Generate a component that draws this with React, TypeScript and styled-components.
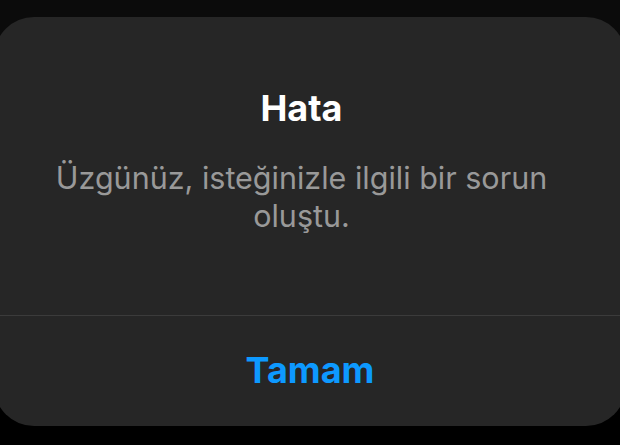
import React from "react";
import styled, { createGlobalStyle } from "styled-components";

const Global = createGlobalStyle`
  html, body {
    margin: 0;
    padding: 0;
    width: 620px;
    height: 445px;
    overflow: hidden;
    background: linear-gradient(#0b0b0b 0 50%, #000 50%);
  }
  body {
    font-family: Inter, "Noto Sans", sans-serif;
  }
`;

const Screen = styled.div`
  width: 620px;
  height: 445px;
  padding-top: 17px;
  box-sizing: border-box;
  overflow: hidden;
`;

const Dialog = styled.div`
  margin: 0 -6px;
  height: 409px;
  background: #262626;
  border-radius: 40px;
  display: flex;
  flex-direction: column;
`;

const Content = styled.div`
  flex: 0 0 298px;
  box-sizing: border-box;
  padding: 71px 47px 0 30px;
  display: flex;
  flex-direction: column;
  align-items: center;
  text-align: center;
`;

const Title = styled.h1`
  margin: 0;
  font-size: 36px;
  line-height: 40px;
  font-weight: 700;
  color: #ffffff;
`;

const Message = styled.p`
  margin: 31px 0 0;
  font-size: 30.5px;
  line-height: 38px;
  font-weight: 400;
  color: #999999;
  max-width: 540px;
`;

const Divider = styled.div`
  height: 1px;
  background: #3b3b3b;
`;

const Action = styled.button`
  flex: 1;
  border: 0;
  background: transparent;
  font-family: inherit;
  font-size: 36px;
  font-weight: 700;
  color: #0d99ff;
  cursor: pointer;
  padding: 0 0 3px;
`;

export default function App() {
  return (
    <>
      <Global />
      <Screen>
        <Dialog>
          <Content>
            <Title>Hata</Title>
            <Message>Üzgünüz, isteğinizle ilgili bir sorun oluştu.</Message>
          </Content>
          <Divider />
          <Action>Tamam</Action>
        </Dialog>
      </Screen>
    </>
  );
}
